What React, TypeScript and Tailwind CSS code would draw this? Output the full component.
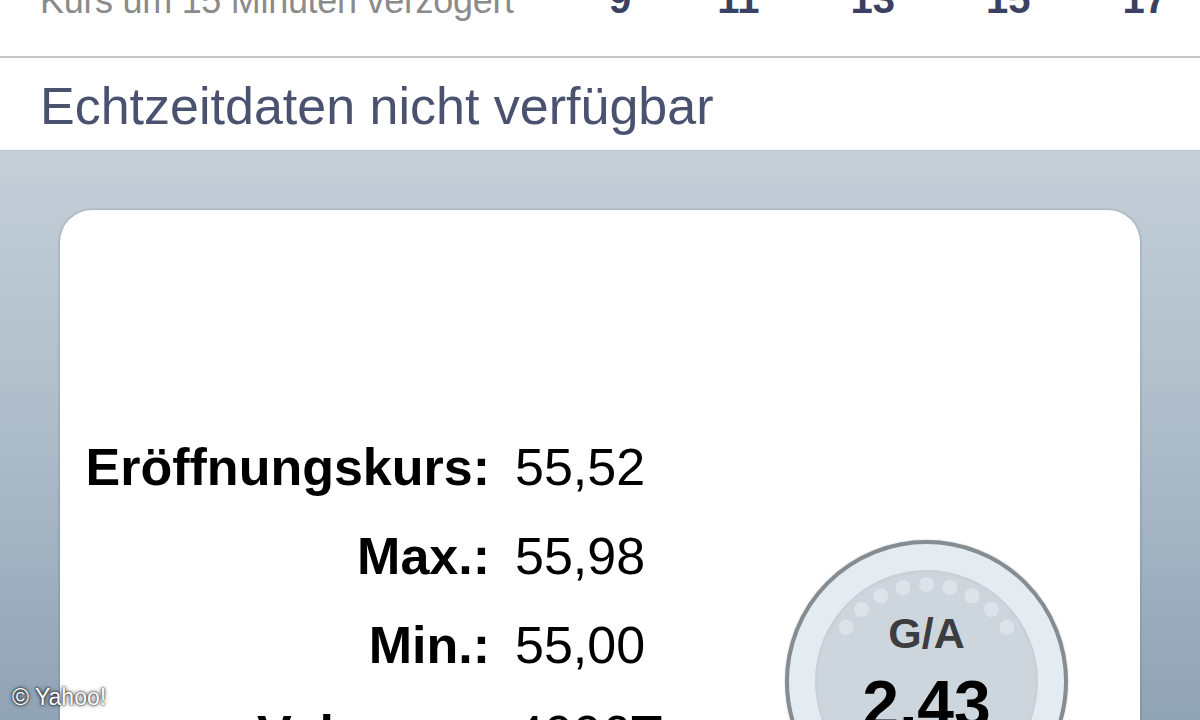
import React from "react";

const dots = Array.from({ length: 9 }, (_, i) => {
  const a = ((-146 + i * 14) * Math.PI) / 180;
  return { cx: 111.5 + 97 * Math.cos(a), cy: 111.5 + 97 * Math.sin(a) };
});

function Gauge() {
  return (
    <div className="w-[283px] h-[283px] rounded-full border-[4px] border-[#858c92] bg-[#e5ecf1] flex items-center justify-center shadow-[0_0_2px_rgba(0,0,0,0.25)]">
      <div className="relative w-[223px] h-[223px] rounded-full bg-[#ced6dd] shadow-[inset_0_0_4px_rgba(0,0,0,0.08)] flex flex-col items-center pt-[42px]">
        <svg className="absolute inset-0" width="223" height="223" viewBox="0 0 223 223">
          {dots.map((d, i) => (
            <circle key={i} cx={d.cx} cy={d.cy} r="7.5" fill="#dce3e9" />
          ))}
        </svg>
        <div className="relative text-[43px] leading-[43px] font-bold text-[#3b3d40]">G/A</div>
        <div className="relative mt-[16px] text-[66px] leading-[66px] font-bold text-black">2,43</div>
      </div>
    </div>
  );
}

const rows = [
  ["Eröffnungskurs:", "55,52"],
  ["Max.:", "55,98"],
  ["Min.:", "55,00"],
  ["Volumen:", "4006T"],
];

export default function App() {
  return (
    <div
      className="relative w-[1200px] h-[720px] overflow-hidden bg-white"
      style={{ fontFamily: '"Liberation Sans", Arial, sans-serif' }}
    >
      {/* top band */}
      <div className="h-[56px] overflow-hidden bg-white">
        <div className="mt-[-19px] flex items-baseline leading-[36px]">
          <span className="w-[560px] pl-[40px] text-[36px] text-[#8b8b8b] whitespace-nowrap tracking-[-0.3px]">
            Kurs um 15 Minuten verzögert
          </span>
          <span className="ml-[49px] text-[40px] font-bold text-[#3a4163]">9</span>
          <span className="ml-[86px] text-[40px] font-bold text-[#3a4163]">11</span>
          <span className="ml-[91px] text-[40px] font-bold text-[#3a4163]">13</span>
          <span className="ml-[91px] text-[40px] font-bold text-[#3a4163]">15</span>
          <span className="ml-[92px] text-[40px] font-bold text-[#3a4163]">17</span>
        </div>
      </div>
      <div className="h-[2px] bg-[#c5c6c8] shadow-[0_1px_2px_rgba(0,0,0,0.15)]" />
      {/* notice band */}
      <div className="h-[92px] pt-[3px] pl-[40px] text-[52px] leading-[90px] text-[#4a5270] bg-white whitespace-nowrap">
        Echtzeitdaten nicht verfügbar
      </div>
      {/* gradient area */}
      <div className="h-[570px] border-t border-[#b9c2ca] bg-gradient-to-b from-[#c5cfd8] via-[#adbcc9] to-[#90a3b5] pt-[59px] px-[60px]">
        <div className="h-[560px] bg-white rounded-t-[32px] shadow-[0_0_3px_rgba(0,0,0,0.3)] flex items-start">
          <div className="w-[725px] pt-[213px] grid grid-cols-[430px_auto] gap-x-[25px]">
            {rows.map(([l, v]) => (
              <React.Fragment key={l}>
                <div className="text-right text-[52px] leading-[89px] font-bold text-black whitespace-nowrap">{l}</div>
                <div className="text-[52px] leading-[89px] text-black whitespace-nowrap">{v}</div>
              </React.Fragment>
            ))}
          </div>
          <div className="mt-[330px]">
            <Gauge />
          </div>
        </div>
      </div>
      <div className="absolute left-[12px] top-[684px] text-[23px] leading-[26px] text-white [text-shadow:0_0_2px_rgba(0,0,0,1),0_0_4px_rgba(0,0,0,0.8)]">
        © Yahoo!
      </div>
    </div>
  );
}
